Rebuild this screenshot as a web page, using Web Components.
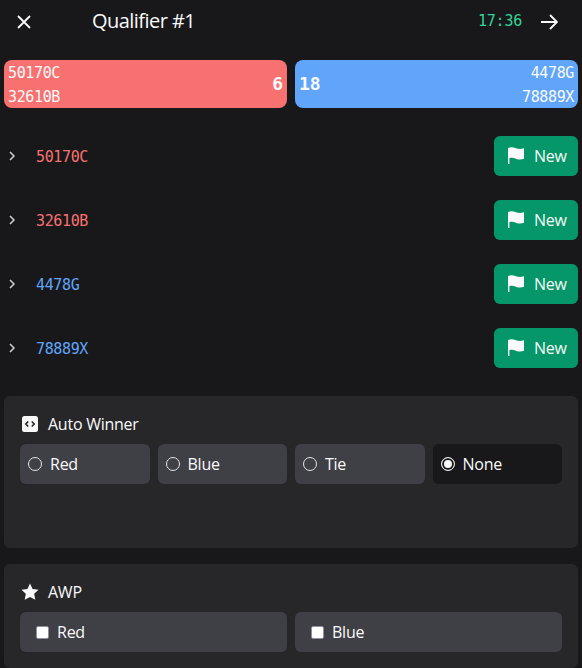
<!DOCTYPE html>
<html>
<head>
<meta charset="utf-8">
<title>Qualifier #1</title>
<style>
  html, body { margin: 0; height: 668px; overflow: hidden; background: #18181b; }
  body { font-family: "Open Sans", "Noto Sans", sans-serif; color: #fafafa; }
</style>
</head>
<body>
<match-page></match-page>

<script>
const FLAG = `<svg width="20" height="20" viewBox="0 0 20 20" fill="currentColor"><path d="M2 2c3-1.200 5.500-.7 8 .2 2.400.9 4.700 1.100 8 .1v10.500c-3.300 1.200-5.600.9-8-.1-2.300-.9-4.600-1.200-6.600-.6V18H2z"/></svg>`;

class MatchHeader extends HTMLElement {
  connectedCallback() {
    this.attachShadow({ mode: "open" }).innerHTML = `
      <style>
        :host { display: flex; align-items: center; height: 44px; padding: 0 24px 0 17px; }
        .title { font-size: 20px; letter-spacing: -.55px; line-height: 42px; height: 44px; margin-left: 61px; flex: 1; }
        .clock { font: 15px "DejaVu Sans Mono", monospace; color: #34d399; margin-right: 19px; letter-spacing: -.23px; padding-bottom: 2px; }
        svg { display: block; }
      </style>
      <svg width="14" height="14" viewBox="0 0 14 14" fill="none" stroke="#fafafa" stroke-width="1.800"><path d="M1 1l12 12M13 1L1 13"/></svg>
      <span class="title">${this.getAttribute("title")}</span>
      <span class="clock">${this.getAttribute("clock")}</span>
      <svg width="17" height="16" viewBox="0 0 17 16" fill="none" stroke="#fafafa" stroke-width="1.800"><path d="M0 8h16M9 1l7 7-7 7"/></svg>
    `;
  }
}

class AllianceBar extends HTMLElement {
  connectedCallback() {
    const teams = this.getAttribute("teams").split(",");
    this.attachShadow({ mode: "open" }).innerHTML = `
      <style>
        :host { display: flex; flex: 1; height: 48px; align-items: center; justify-content: space-between;
                padding: 0 4px; border-radius: 8px; background: var(--bar); color: #fafafa; }
        :host([side="blue"]) { flex-direction: row-reverse; }
        .teams { font: 15px/24px "DejaVu Sans Mono", monospace; letter-spacing: -.36px; padding-top: 1px; }
        :host([side="blue"]) .teams { text-align: right; }
        .score { font: bold 18px "DejaVu Sans Mono", monospace; padding-bottom: 2px; }
      </style>
      <div class="teams">${teams.map((t) => `<div>${t}</div>`).join("")}</div>
      <div class="score">${this.getAttribute("score")}</div>
    `;
  }
}

class TeamRow extends HTMLElement {
  connectedCallback() {
    this.attachShadow({ mode: "open" }).innerHTML = `
      <style>
        :host { display: flex; align-items: center; height: 40px; padding-left: 9px; }
        .chev { display: block; margin-right: 21px; }
        .num { flex: 1; font: 15px "DejaVu Sans Mono", monospace; letter-spacing: -.36px; color: var(--team); padding-top: 2px; }
        button { display: flex; align-items: center; gap: 8px; height: 40px; width: 84px; padding: 0 0 0 12px;
                 border: 0; border-radius: 6px; background: #059669; color: #fafafa;
                 font: 16px "Open Sans", sans-serif; letter-spacing: -.25px; }
      </style>
      <svg class="chev" width="6" height="10" viewBox="0 0 6 10" fill="none" stroke="#d4d4d8" stroke-width="1.500"><path d="M1 1l4 4-4 4"/></svg>
      <span class="num">${this.getAttribute("number")}</span>
      <button>${FLAG}<span>New</span></button>
    `;
  }
}

class FieldPanel extends HTMLElement {
  connectedCallback() {
    this.attachShadow({ mode: "open" }).innerHTML = `
      <style>
        :host { display: block; padding: 16px; border-radius: 6px; background: #27272a; }
        .head { display: flex; align-items: center; gap: 9px; height: 24px; margin-bottom: 8px; padding-left: 1px;
                font-size: 16px; letter-spacing: -.25px; }
        ::slotted(svg) { display: block; }
        .opts { display: grid; grid-template-columns: repeat(var(--cols), 1fr); gap: 8px; }
      </style>
      <div class="head"><slot name="icon"></slot><span>${this.getAttribute("label")}</span></div>
      <div class="opts"><slot></slot></div>
    `;
  }
}

class RadioOption extends HTMLElement {
  connectedCallback() {
    this.attachShadow({ mode: "open" }).innerHTML = `
      <style>
        :host { display: block; }
        label { display: flex; align-items: center; gap: 8px; height: 40px; padding-left: 8px;
                border-radius: 6px; background: #3f3f46; font-size: 16px; letter-spacing: -.25px; }
        :host([checked]) label { background: #18181b; }
        input { appearance: none; box-sizing: border-box; width: 14px; height: 14px; margin: 0;
                border: 1px solid #e4e4e7; border-radius: 50%; }
        input:checked { background: #fafafa; box-shadow: inset 0 0 0 2px #18181b; }
      </style>
      <label><input type="radio" name="w" ${this.hasAttribute("checked") ? "checked" : ""}><span><slot></slot></span></label>
    `;
  }
}

class CheckOption extends HTMLElement {
  connectedCallback() {
    this.attachShadow({ mode: "open" }).innerHTML = `
      <style>
        :host { display: block; }
        label { display: flex; align-items: center; gap: 8px; height: 40px; padding-left: 16px;
                border-radius: 6px; background: #3f3f46; font-size: 16px; letter-spacing: -.25px; }
        input { appearance: none; box-sizing: border-box; width: 13px; height: 13px; margin: 0;
                background: #fff; border: 1px solid #8f8f9d; border-radius: 2px; }
      </style>
      <label><input type="checkbox"><span><slot></slot></span></label>
    `;
  }
}

class MatchPage extends HTMLElement {
  connectedCallback() {
    this.attachShadow({ mode: "open" }).innerHTML = `
      <style>
        :host { display: block; }
        .bars { display: flex; gap: 8px; padding: 16px 4px 0; }
        .rows { display: flex; flex-direction: column; gap: 24px; padding: 28px 4px 0 0; }
        .panels { display: flex; flex-direction: column; gap: 16px; padding: 28px 4px 0; }
        .auto { height: 120px; --cols: 4; }
        .awp { --cols: 2; }
        .red { --bar: #f87171; --team: #f87171; }
        .blue { --bar: #60a5fa; --team: #60a5fa; }
      </style>
      <match-header title="Qualifier #1" clock="17:36"></match-header>
      <div class="bars">
        <alliance-bar class="red" side="red" teams="50170C,32610B" score="6"></alliance-bar>
        <alliance-bar class="blue" side="blue" teams="4478G,78889X" score="18"></alliance-bar>
      </div>
      <div class="rows">
        <team-row class="red" number="50170C"></team-row>
        <team-row class="red" number="32610B"></team-row>
        <team-row class="blue" number="4478G"></team-row>
        <team-row class="blue" number="78889X"></team-row>
      </div>
      <div class="panels">
        <field-panel class="auto" label="Auto Winner">
          <svg slot="icon" width="18" height="18" viewBox="0 0 18 18"><rect x="1" y="1" width="16" height="16" rx="2.500" fill="#fafafa"/><path d="M7.300 6.500L4.800 9l2.500 2.500M10.700 6.500L13.200 9l-2.500 2.500" fill="none" stroke="#27272a" stroke-width="1.600"/></svg>
          <radio-option>Red</radio-option>
          <radio-option>Blue</radio-option>
          <radio-option>Tie</radio-option>
          <radio-option checked>None</radio-option>
        </field-panel>
        <field-panel class="awp" label="AWP">
          <svg slot="icon" width="18" height="18" viewBox="0 0 18 18" fill="#fafafa"><path d="M9 .5l2.600 5.400 5.900.8-4.300 4.100 1.100 5.900L9 13.900l-5.300 2.800 1.100-5.900L.5 6.700l5.900-.8z"/></svg>
          <check-option>Red</check-option>
          <check-option>Blue</check-option>
        </field-panel>
      </div>
    `;
  }
}

customElements.define("match-header", MatchHeader);
customElements.define("alliance-bar", AllianceBar);
customElements.define("team-row", TeamRow);
customElements.define("field-panel", FieldPanel);
customElements.define("radio-option", RadioOption);
customElements.define("check-option", CheckOption);
customElements.define("match-page", MatchPage);
</script>
</body>
</html>
